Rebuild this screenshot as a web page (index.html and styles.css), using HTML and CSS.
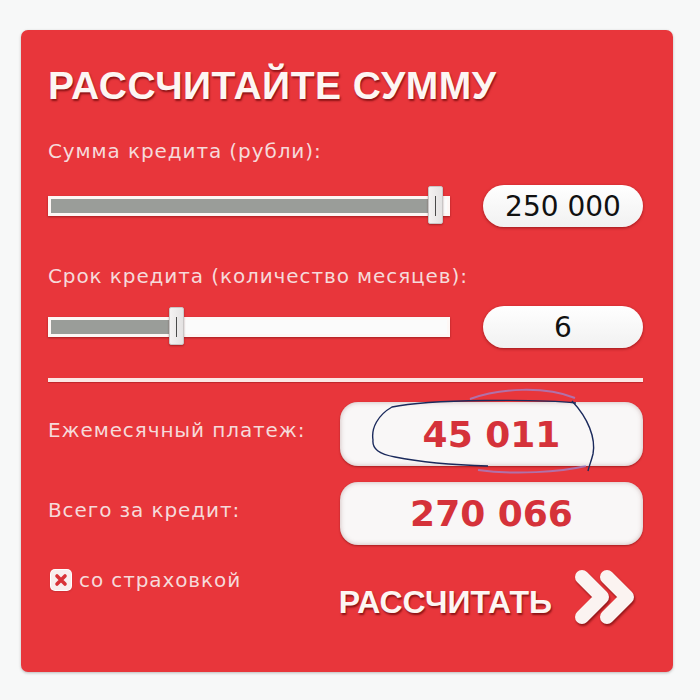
FILE: index.html
```html
<!DOCTYPE html>
<html lang="ru">
<head>
<meta charset="utf-8">
<title>Рассчитайте сумму</title>
<link rel="stylesheet" href="styles.css">
</head>
<body>
<div class="card">
  <h1 class="title">РАССЧИТАЙТЕ СУММУ</h1>

  <div class="label label-first">Сумма кредита (рубли):</div>
  <div class="slider-row row-first">
    <div class="track">
      <div class="fill" style="width:381px"></div>
      <div class="thumb" style="left:377px"></div>
    </div>
    <div class="value">250 000</div>
  </div>

  <div class="label label-second">Срок кредита (количество месяцев):</div>
  <div class="slider-row row-second">
    <div class="track">
      <div class="fill" style="width:121px"></div>
      <div class="thumb" style="left:118px"></div>
    </div>
    <div class="value">6</div>
  </div>

  <div class="divider"></div>

  <div class="result-row result-first">
    <div class="label result-label">Ежемесячный платеж:</div>
    <div class="result">45 011</div>
  </div>
  <div class="result-row result-second">
    <div class="label result-label">Всего за кредит:</div>
    <div class="result">270 066</div>
  </div>

  <div class="bottom-row">
    <div class="insurance">
      <span class="checkbox">
        <svg viewBox="0 0 20 20" width="20" height="20">
          <path d="M6 6 L14 14 M14 6 L6 14" stroke="#d93238" stroke-width="3.6" stroke-linecap="round" fill="none"/>
        </svg>
      </span>
      <span class="label insurance-label">со страховкой</span>
    </div>
    <div class="calc">
      <span class="calc-text">РАССЧИТАТЬ</span>
      <svg class="chevrons" viewBox="0 0 64 58" width="64" height="58">
        <polyline points="9,9 29,29 9,49" fill="none" stroke="#fbf3f1" stroke-width="14" stroke-linecap="round" stroke-linejoin="round"/>
        <polyline points="34,9 54,29 34,49" fill="none" stroke="#fbf3f1" stroke-width="14" stroke-linecap="round" stroke-linejoin="round"/>
      </svg>
    </div>
  </div>

  <svg class="scribble" viewBox="21 30 652 642" width="652" height="642">
    <path d="M470 399 C500 388 545 386 575 398" fill="none" stroke="#9a8ad8" stroke-width="2" opacity="0.7"/>
    <path d="M478 470 C515 475 560 472 586 466" fill="none" stroke="#9a8ad8" stroke-width="2" opacity="0.7"/>
    <path d="M576 403 C540 399 430 399 392 407 C378 415 371 428 373 440 C372 449 379 454 395 457 C420 462 455 465 488 466" fill="none" stroke="#1b2a5c" stroke-width="1.4"/>
    <path d="M572 401 C588 418 596 438 593 454 C591 462 589 466 588 471" fill="none" stroke="#1b2a5c" stroke-width="1.4"/>
  </svg>
</div>
</body>
</html>
```

FILE: styles.css
```css
html, body {
  margin: 0;
  padding: 0;
}

body {
  width: 700px;
  height: 700px;
  background: #f7f8f8;
  overflow: hidden;
}

.card {
  position: relative;
  box-sizing: border-box;
  width: 652px;
  height: 642px;
  margin: 30px 0 0 21px;
  padding: 36px 30px 0 27px;
  background: #e8363b;
  border-radius: 7px;
  box-shadow: 0 1px 3px rgba(0, 0, 0, 0.25);
}

.title {
  margin: 0;
  height: 40px;
  font-family: "Liberation Sans", Arial, sans-serif;
  font-weight: bold;
  font-size: 39px;
  line-height: 40px;
  color: #fdf6f3;
  letter-spacing: 0.5px;
  text-shadow: 1px 2px 2px rgba(90, 0, 0, 0.65);
  white-space: nowrap;
}

.label {
  font-family: "DejaVu Sans", Verdana, sans-serif;
  font-size: 20px;
  line-height: 20px;
  letter-spacing: 0.9px;
  color: #f6dada;
  white-space: nowrap;
}

.label-first {
  margin-top: 35px;
}

.label-second {
  margin-top: 38px;
}

.slider-row {
  display: grid;
  grid-template-columns: 402px 160px;
  column-gap: 33px;
  align-items: center;
  height: 44px;
}

.row-first {
  margin-top: 23px;
}

.row-second {
  margin-top: 19px;
}

.track {
  position: relative;
  box-sizing: border-box;
  height: 20px;
  border: 3px solid #fdf7f5;
  background: #fbfbfb;
  box-shadow: 0 1px 2px rgba(80, 0, 0, 0.45);
}

.fill {
  height: 100%;
  background: #9a9d99;
}

.thumb {
  position: absolute;
  top: -13px;
  box-sizing: border-box;
  width: 15px;
  height: 38px;
  border: 1px solid #c9c6c6;
  border-radius: 2px;
  background: linear-gradient(to right, #f4f2f2, #e4e2e2);
  box-shadow: 0 1px 2px rgba(70, 0, 0, 0.4);
}

.thumb::after {
  content: "";
  position: absolute;
  left: 6px;
  top: 9px;
  width: 1px;
  height: 20px;
  background: #4a4a4a;
}

.value {
  height: 42px;
  border-radius: 21px;
  background: linear-gradient(#ffffff, #f1f1f1);
  box-shadow: 0 1px 3px rgba(90, 0, 0, 0.55);
  display: flex;
  align-items: center;
  justify-content: center;
  font-family: "DejaVu Sans", Verdana, sans-serif;
  font-size: 28px;
  color: #111;
}

.divider {
  margin-top: 29px;
  height: 4px;
  background: #fbe7e4;
  box-shadow: 0 1px 1px rgba(90, 0, 0, 0.3);
}

.result-row {
  display: grid;
  grid-template-columns: 292px 303px;
  align-items: start;
}

.result-first {
  margin-top: 20px;
}

.result-second {
  margin-top: 16px;
}

.result-label {
  padding-top: 18px;
}

.result {
  height: 64px;
  border-radius: 18px;
  background: #f9f7f7;
  box-shadow: inset 0 0 5px rgba(120, 60, 60, 0.35), 0 1px 2px rgba(90, 0, 0, 0.45);
  display: flex;
  align-items: center;
  justify-content: center;
  font-family: "DejaVu Sans", Verdana, sans-serif;
  font-weight: bold;
  font-size: 36px;
  color: #d5323a;
}

.result-second .result {
  height: 63px;
}

.bottom-row {
  margin-top: 23px;
  display: flex;
  justify-content: space-between;
  align-items: flex-start;
}

.insurance {
  margin-top: 2px;
  margin-left: 3px;
  display: flex;
  align-items: flex-start;
  gap: 8px;
}

.checkbox {
  display: block;
  width: 20px;
  height: 20px;
  border-radius: 4px;
  background: #f8eeee;
  box-shadow: 0 0 0 1px #ffffff, 0 1px 2px rgba(80, 0, 0, 0.5);
}

.checkbox svg {
  display: block;
}

.calc {
  display: flex;
  align-items: flex-start;
  margin-right: 6px;
}

.calc-text {
  margin-top: 18px;
  margin-right: 21px;
  font-family: "Liberation Sans", Arial, sans-serif;
  font-weight: bold;
  font-size: 32px;
  line-height: 32px;
  color: #fdf6f3;
  text-shadow: 1px 2px 2px rgba(90, 0, 0, 0.65);
}

.chevrons {
  display: block;
  filter: drop-shadow(1px 2px 1px rgba(90, 0, 0, 0.6));
}

.scribble {
  position: absolute;
  left: 0;
  top: 0;
  pointer-events: none;
}
```
